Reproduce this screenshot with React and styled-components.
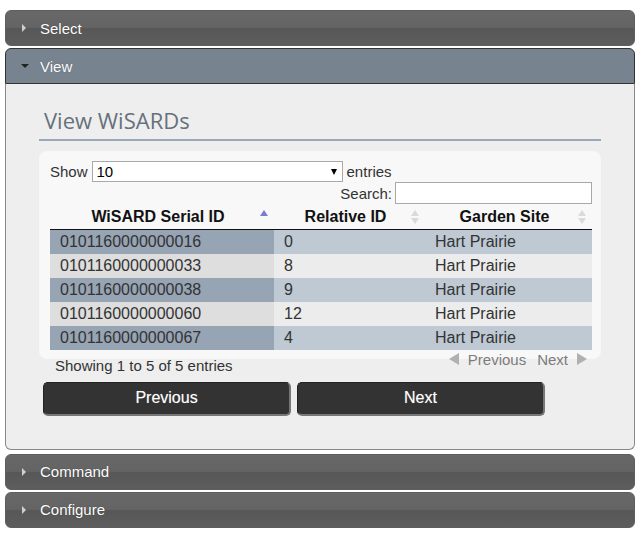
import React from 'react';
import styled, { createGlobalStyle } from 'styled-components';

const GlobalStyle = createGlobalStyle`
  body {
    margin: 0;
    background: #ffffff;
    font-family: "Liberation Sans", Arial, sans-serif;
  }
`;

const Accordion = styled.div`
  padding: 10px 6px 10px 5px;
  display: flex;
  flex-direction: column;
`;

const Header = styled.div`
  height: 36px;
  box-sizing: border-box;
  display: flex;
  align-items: center;
  padding-left: 16px;
  margin-top: ${props => props.gap || '2px'};
  color: #ffffff;
  font-size: 15px;
  text-shadow: 0 0 1px rgba(0, 0, 0, 0.4);
  border: 1px solid ${props => (props.active ? '#333333' : '#5e5e5e')};
  border-radius: ${props => (props.active ? '6px 6px 0 0' : '6px')};
  background: ${props => (props.active
    ? '#778490'
    : 'linear-gradient(to bottom, #686868 0%, #646464 48%, #575757 52%, #5d5d5d 100%)')};
  &:first-child {
    margin-top: 0;
  }
`;

const Caret = styled.span`
  width: 0;
  height: 0;
  margin-right: 14px;
  ${props => (props.open
    ? `border-left: 4px solid transparent;
       border-right: 4px solid transparent;
       border-top: 4px solid #222;
       margin-left: -1px;
       margin-right: 11px;`
    : `border-top: 4px solid transparent;
       border-bottom: 4px solid transparent;
       border-left: 4px solid #cfcfcf;`)}
`;

const Panel = styled.div`
  background: #eeeeee;
  border: 1px solid #888888;
  border-top: none;
  border-radius: 0 0 6px 6px;
  padding: 21px 33px 33px 33px;
`;

const Title = styled.h2`
  margin: 0;
  padding: 0 0 4px 5px;
  font-family: "Open Sans", "DejaVu Sans", sans-serif;
  font-weight: 400;
  font-size: 22px;
  color: #66717c;
  border-bottom: 2px solid #9aa8b8;
`;

const TableBox = styled.div`
  margin-top: 10px;
  background: #f8f8f8;
  border-radius: 8px;
  padding: 10px 9px 9px 11px;
  font-size: 15px;
  color: #333333;
`;

const LengthRow = styled.div`
  display: flex;
  align-items: center;
  gap: 4px;
  height: 21px;
`;

const Select = styled.div`
  width: 251px;
  height: 21px;
  box-sizing: border-box;
  border: 1px solid #a9a9a9;
  background: #ffffff;
  display: flex;
  align-items: center;
  justify-content: space-between;
  padding: 0 5px 0 4px;
  color: #000;
  font-size: 15px;
`;

const SmallArrow = styled.span`
  width: 0;
  height: 0;
  border-left: 3.5px solid transparent;
  border-right: 3.5px solid transparent;
  border-top: 6px solid #000;
`;

const SearchRow = styled.div`
  display: flex;
  justify-content: flex-end;
  align-items: center;
  gap: 3px;
`;

const SearchInput = styled.div`
  width: 197px;
  height: 22px;
  box-sizing: border-box;
  border: 1px solid #a9a9a9;
  background: #ffffff;
`;

const Table = styled.table`
  width: 100%;
  table-layout: fixed;
  border-collapse: collapse;
  font-size: 16px;
  margin-top: 1px;
`;

const Th = styled.th`
  position: relative;
  box-sizing: border-box;
  height: 24px;
  padding: 0 18px 0 10px;
  font-weight: 700;
  color: #111;
  text-align: center;
  white-space: nowrap;
  border-bottom: 1px solid #111;
  width: ${props => props.w || 'auto'};
`;

const SortIcon = styled.span`
  position: absolute;
  right: 6px;
  top: 5px;
  display: flex;
  flex-direction: column;
  gap: 2px;
  &::before, &::after {
    content: '';
    width: 0;
    height: 0;
    border-left: 4px solid transparent;
    border-right: 4px solid transparent;
  }
  &::before {
    border-bottom: 6px solid ${props => (props.asc ? '#7a7ad6' : '#dadada')};
  }
  &::after {
    border-top: 6px solid ${props => (props.asc ? 'transparent' : '#dadada')};
  }
`;

const Td = styled.td`
  height: 24px;
  padding: 0 10px;
  color: #333333;
  white-space: nowrap;
  text-align: ${props => props.align || 'left'};
  background: ${props => {
    if (props.odd) return props.sorted ? '#96a4b3' : '#bec9d3';
    return props.sorted ? '#dedede' : '#ececec';
  }};
`;

const Footer = styled.div`
  display: flex;
  justify-content: space-between;
  align-items: flex-start;
  margin-top: -8px;
  font-size: 15px;
  color: #333333;
`;

const Info = styled.div`
  padding: 6px 0 0 16px;
`;

const Pager = styled.div`
  display: flex;
  align-items: center;
  gap: 11px;
  padding-right: 14px;
  color: #7c7c7c;
`;

const PageLink = styled.span`
  display: flex;
  align-items: center;
  gap: 9px;
`;

const PageArrow = styled.span`
  width: 0;
  height: 0;
  border-top: 6px solid transparent;
  border-bottom: 6px solid transparent;
  ${props => (props.dir === 'left'
    ? 'border-right: 10px solid #b0b0b0;'
    : 'border-left: 10px solid #b0b0b0;')}
`;

const Buttons = styled.div`
  display: flex;
  gap: 6px;
  margin-top: 8px;
  padding-left: 4px;
`;

const Button = styled.button`
  width: 248px;
  height: 34px;
  border: 1px solid #222;
  border-bottom: 2px solid #777;
  border-right: 2px solid #777;
  border-radius: 5px;
  background: #333333;
  color: #ffffff;
  font-family: "Liberation Sans", Arial, sans-serif;
  font-size: 16px;
  text-shadow: 0 0 1px rgba(255, 255, 255, 0.4);
`;

const rows = [
  ['0101160000000016', '0', 'Hart Prairie'],
  ['0101160000000033', '8', 'Hart Prairie'],
  ['0101160000000038', '9', 'Hart Prairie'],
  ['0101160000000060', '12', 'Hart Prairie'],
  ['0101160000000067', '4', 'Hart Prairie'],
];

const App = () => (
  <>
    <GlobalStyle />
    <Accordion>
      <Header>
        <Caret />
        Select
      </Header>
      <Header active>
        <Caret open />
        View
      </Header>
      <Panel>
        <Title>View WiSARDs</Title>
        <TableBox>
          <LengthRow>
            Show
            <Select>
              10
              <SmallArrow />
            </Select>
            entries
          </LengthRow>
          <SearchRow>
            Search:
            <SearchInput />
          </SearchRow>
          <Table>
            <thead>
              <tr>
                <Th w="224px">
                  WiSARD Serial ID
                  <SortIcon asc />
                </Th>
                <Th w="151px">
                  Relative ID
                  <SortIcon />
                </Th>
                <Th>
                  Garden Site
                  <SortIcon />
                </Th>
              </tr>
            </thead>
            <tbody>
              {rows.map((r, i) => (
                <tr key={r[0]}>
                  <Td odd={i % 2 === 0} sorted>{r[0]}</Td>
                  <Td odd={i % 2 === 0}>{r[1]}</Td>
                  <Td odd={i % 2 === 0}>{r[2]}</Td>
                </tr>
              ))}
            </tbody>
          </Table>
        </TableBox>
        <Footer>
          <Info>Showing 1 to 5 of 5 entries</Info>
          <Pager>
            <PageLink>
              <PageArrow dir="left" />
              Previous
            </PageLink>
            <PageLink>
              Next
              <PageArrow dir="right" />
            </PageLink>
          </Pager>
        </Footer>
        <Buttons>
          <Button type="button">Previous</Button>
          <Button type="button">Next</Button>
        </Buttons>
      </Panel>
      <Header gap="4px">
        <Caret />
        Command
      </Header>
      <Header>
        <Caret />
        Configure
      </Header>
    </Accordion>
  </>
);

export default App;
